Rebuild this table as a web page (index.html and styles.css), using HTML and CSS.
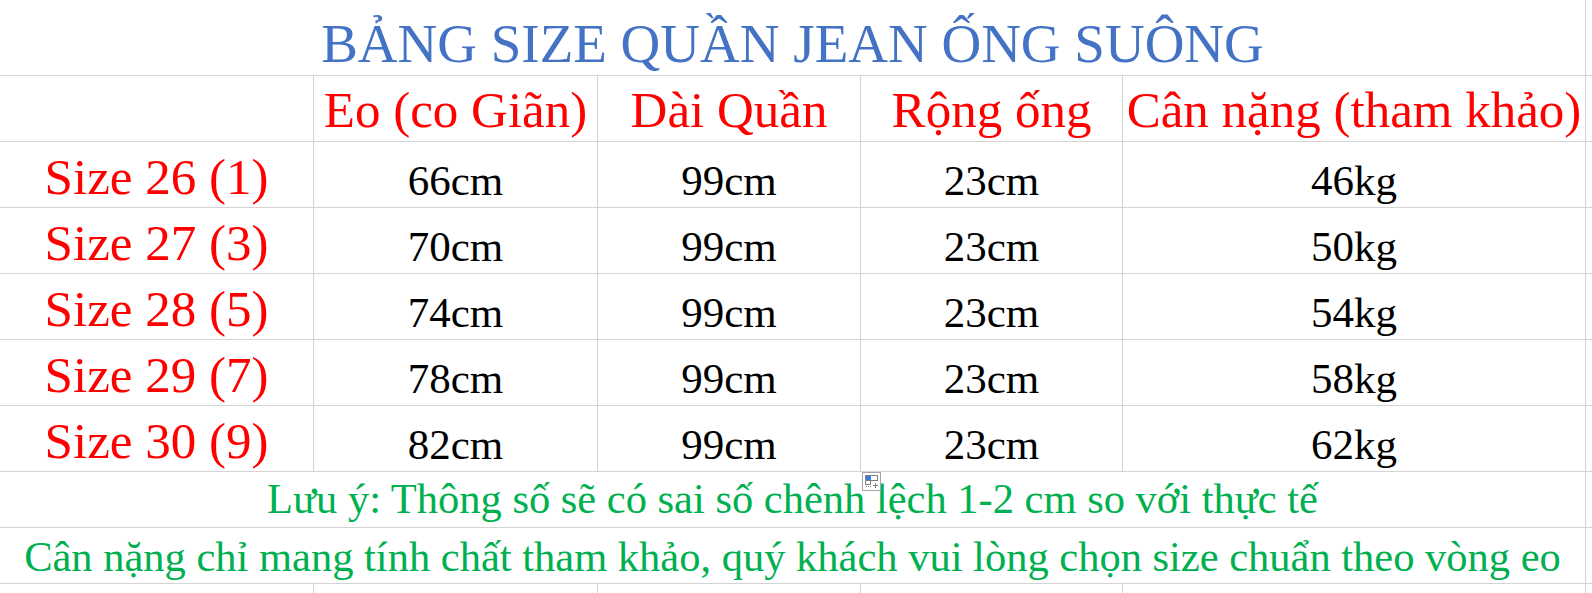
FILE: index.html
```html
<!DOCTYPE html>
<html lang="vi">
<head>
<meta charset="utf-8">
<title>Bảng size quần jean ống suông</title>
<link rel="stylesheet" href="styles.css">
</head>
<body>
<div class="sheet">
  <div class="cell span5 title">BẢNG SIZE QUẦN JEAN ỐNG SUÔNG</div>
  <div class="cell edge"></div>

  <div class="cell head"></div>
  <div class="cell head">Eo (co Giãn)</div>
  <div class="cell head">Dài Quần</div>
  <div class="cell head">Rộng ống</div>
  <div class="cell head">Cân nặng (tham khảo)</div>
  <div class="cell edge"></div>

  <div class="cell label">Size 26 (1)</div>
  <div class="cell val">66cm</div>
  <div class="cell val">99cm</div>
  <div class="cell val">23cm</div>
  <div class="cell val">46kg</div>
  <div class="cell edge"></div>

  <div class="cell label">Size 27 (3)</div>
  <div class="cell val">70cm</div>
  <div class="cell val">99cm</div>
  <div class="cell val">23cm</div>
  <div class="cell val">50kg</div>
  <div class="cell edge"></div>

  <div class="cell label">Size 28 (5)</div>
  <div class="cell val">74cm</div>
  <div class="cell val">99cm</div>
  <div class="cell val">23cm</div>
  <div class="cell val">54kg</div>
  <div class="cell edge"></div>

  <div class="cell label">Size 29 (7)</div>
  <div class="cell val">78cm</div>
  <div class="cell val">99cm</div>
  <div class="cell val">23cm</div>
  <div class="cell val">58kg</div>
  <div class="cell edge"></div>

  <div class="cell label">Size 30 (9)</div>
  <div class="cell val">82cm</div>
  <div class="cell val">99cm</div>
  <div class="cell val">23cm</div>
  <div class="cell val">62kg</div>
  <div class="cell edge"></div>

  <div class="cell span5 note note1">Lưu ý: Thông số sẽ có sai số chênh lệch 1-2 cm so với thực tế</div>
  <div class="cell edge"></div>

  <div class="cell span5 note note2">Cân nặng chỉ mang tính chất tham khảo, quý khách vui lòng chọn size chuẩn theo vòng eo</div>
  <div class="cell edge"></div>

  <div class="cell tail"></div>
  <div class="cell tail"></div>
  <div class="cell tail"></div>
  <div class="cell tail"></div>
  <div class="cell tail"></div>
  <div class="cell tail edge"></div>

  <div class="paste-icon">
    <svg width="19" height="19" viewBox="0 0 19 19">
      <rect x="0.5" y="0.5" width="18" height="18" fill="#ffffff" stroke="#a6a6a6"/>
      <rect x="3.5" y="3.5" width="12" height="5" fill="#ffffff" stroke="#7f7f7f"/>
      <rect x="4" y="4" width="5" height="4" fill="#3c7be4"/>
      <rect x="3.5" y="8.5" width="5" height="4" fill="#ffffff" stroke="#7f7f7f"/>
      <rect x="4" y="14" width="1" height="1" fill="#7f7f7f"/>
      <rect x="6" y="14" width="1" height="1" fill="#7f7f7f"/>
      <rect x="8" y="14" width="1" height="1" fill="#7f7f7f"/>
      <path d="M11 13.5h5M13.5 11v5" stroke="#7f7f7f" stroke-width="1"/>
    </svg>
  </div>
</div>
</body>
</html>
```

FILE: styles.css
```css
html, body {
  margin: 0;
  padding: 0;
  background: #ffffff;
}

.sheet {
  position: relative;
  display: grid;
  grid-template-columns: 314px 284px 263px 262px 463px 1fr;
  grid-template-rows: 76px 66px 66px 66px 66px 66px 66px 56px 56px 1fr;
  width: 1592px;
  height: 593px;
  overflow: hidden;
  font-family: "Liberation Serif", "Times New Roman", serif;
}

.cell {
  display: flex;
  align-items: flex-end;
  justify-content: center;
  white-space: nowrap;
  line-height: 1;
  border-right: 1px solid #d4d4d4;
  border-bottom: 1px solid #d4d4d4;
  min-width: 0;
}

.edge {
  border-right: none;
}

.span5 {
  grid-column: 1 / 6;
}

.title {
  font-size: 55px;
  color: #4472c4;
  padding-bottom: 4px;
}

.head {
  font-size: 51px;
  color: #ff0000;
  padding-bottom: 5px;
}

.label {
  font-size: 51px;
  color: #ff0000;
  padding-bottom: 4px;
}

.val {
  font-size: 43px;
  color: #000000;
  padding-bottom: 5px;
}

.note {
  font-size: 42.5px;
  color: #00b050;
}

.note1 {
  padding-bottom: 7px;
}

.note2 {
  padding-bottom: 5px;
}

.tail {
  border-bottom: none;
}

.paste-icon {
  position: absolute;
  left: 862px;
  top: 472px;
  width: 19px;
  height: 19px;
  line-height: 0;
}
```
